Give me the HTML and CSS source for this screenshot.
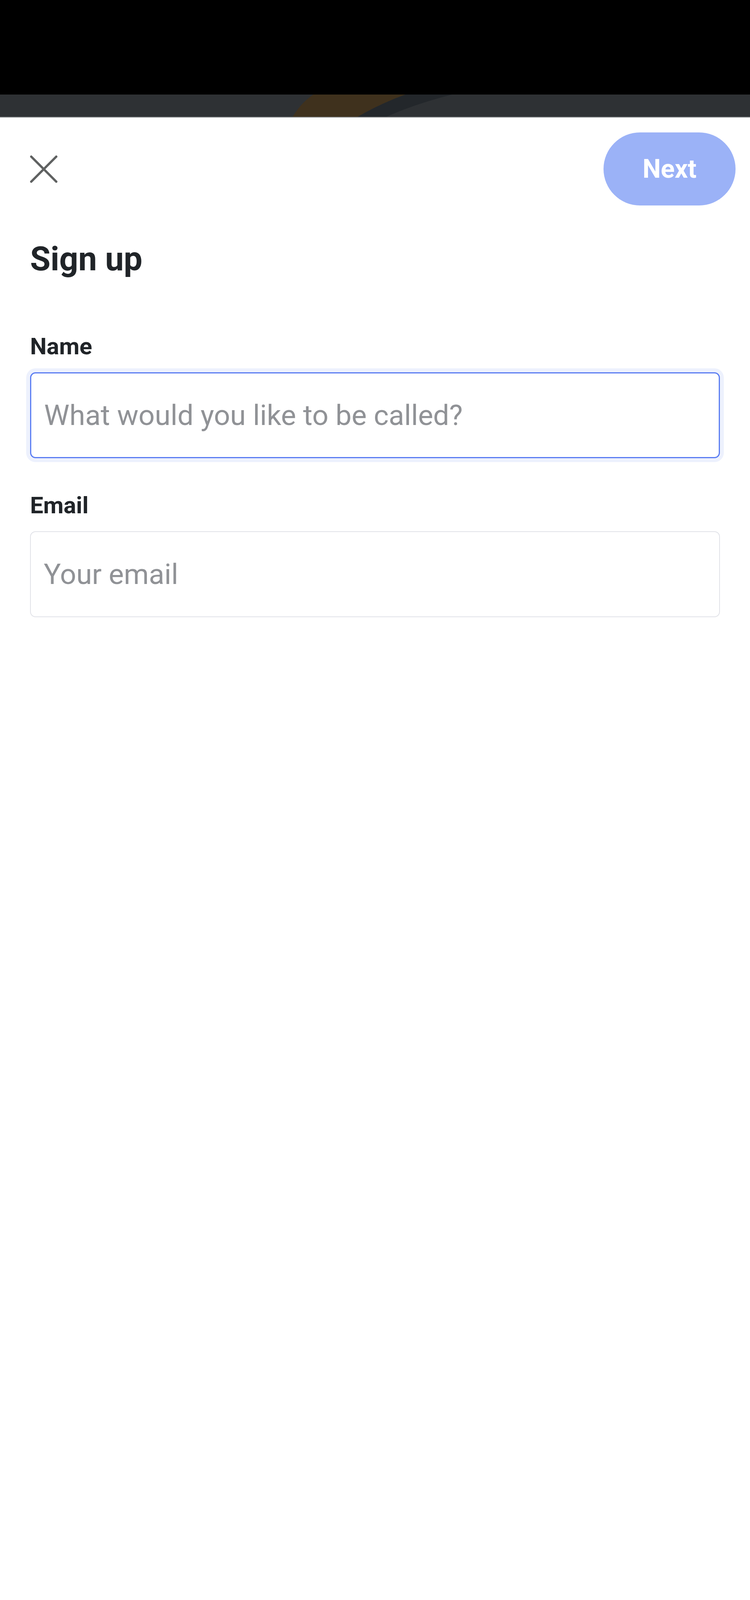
FILE: index.html
```html
<!DOCTYPE html>
<html lang="en">
<head>
    <meta charset="UTF-8">
    <meta name="viewport" content="width=device-width, initial-scale=1.0">
    <title>Sign up</title>
    <link rel="stylesheet" href="styles.css">
</head>
<body>
<div class="status-bar"></div>
<div class="peek">
    <svg class="peek-art" viewBox="0 0 1920 57" preserveAspectRatio="none">
        <path d="M802 0 L1038 0 Q970 25 916 57 L749 57 Q770 22 802 0 Z" fill="#3f311d"/>
        <path d="M1038 0 L1157 0 Q1060 25 989 57 L916 57 Q970 25 1038 0 Z" fill="#23272b"/>
    </svg>
</div>
<div class="sheet">
    <div class="toolbar">
        <button class="close-btn" aria-label="Close">
            <svg viewBox="0 0 70 70" width="70" height="70">
                <path d="M3 3 L67 67 M67 3 L3 67" stroke="#5f6161" stroke-width="6" stroke-linecap="round" fill="none"/>
            </svg>
        </button>
        <button class="next-btn">Next</button>
    </div>

    <div class="content">
        <h1 class="title">Sign up</h1>

        <div class="field">
            <label for="name" class="label">Name</label>
            <input type="text" id="name" class="text-input focused" placeholder="What would you like to be called?">
        </div>

        <div class="field">
            <label for="email" class="label">Email</label>
            <input type="email" id="email" class="text-input" placeholder="Your email">
        </div>
    </div>

    <div class="home-indicator"></div>
</div>
</body>
</html>
```

FILE: styles.css
```css
* {
    box-sizing: border-box;
}

body {
    font-family: Roboto, 'Noto Sans', Arial, sans-serif;
    background-color: #fff;
    color: #202428;
    margin: 0;
    padding: 0;
    width: 1920px;
    height: 4160px;
    display: flex;
    flex-direction: column;
}

.status-bar {
    height: 242px;
    background-color: #000;
}

.peek {
    height: 59px;
    background-color: #2e3134;
    border-bottom: 2px solid #8a8c8e;
}

.peek-art {
    display: block;
    width: 100%;
    height: 57px;
}

.sheet {
    flex: 1;
    display: flex;
    flex-direction: column;
    background-color: #fff;
}

.toolbar {
    display: flex;
    align-items: center;
    justify-content: space-between;
    padding: 38px 37px 0 64px;
}

.close-btn {
    width: 96px;
    height: 96px;
    padding: 0;
    border: none;
    background: none;
    display: flex;
    align-items: center;
    justify-content: center;
    cursor: pointer;
}

.next-btn {
    width: 338px;
    height: 187px;
    border: none;
    border-radius: 94px;
    background-color: #9bb2f7;
    color: #fff;
    font-family: Roboto, sans-serif;
    font-size: 66px;
    font-weight: 700;
    cursor: pointer;
}

.content {
    padding: 0 77px;
}

.title {
    margin: 87px 0 0 0;
    font-size: 85px;
    line-height: 100px;
    font-weight: 700;
}

.field {
    display: flex;
    flex-direction: column;
}

.field:first-of-type {
    margin-top: 139px;
}

.field + .field {
    margin-top: 86px;
}

.label {
    font-size: 60px;
    line-height: 70px;
    font-weight: 700;
    margin-bottom: 31px;
}

.text-input {
    width: 100%;
    height: 220px;
    padding: 0 36px 0 33px;
    font-family: Roboto, sans-serif;
    font-size: 73px;
    color: #202428;
    border: 2px solid #e1e2e8;
    border-radius: 14px;
    outline: none;
    background-color: #fff;
}

.text-input::placeholder {
    color: #909296;
}

.text-input.focused {
    border: 3px solid #5a7cf2;
    box-shadow: 0 0 0 10px #edf1fd;
}

.home-indicator {
    margin: auto auto 30px auto;
    width: 351px;
    height: 12px;
    border-radius: 6px;
    background-color: #626262;
}
```
